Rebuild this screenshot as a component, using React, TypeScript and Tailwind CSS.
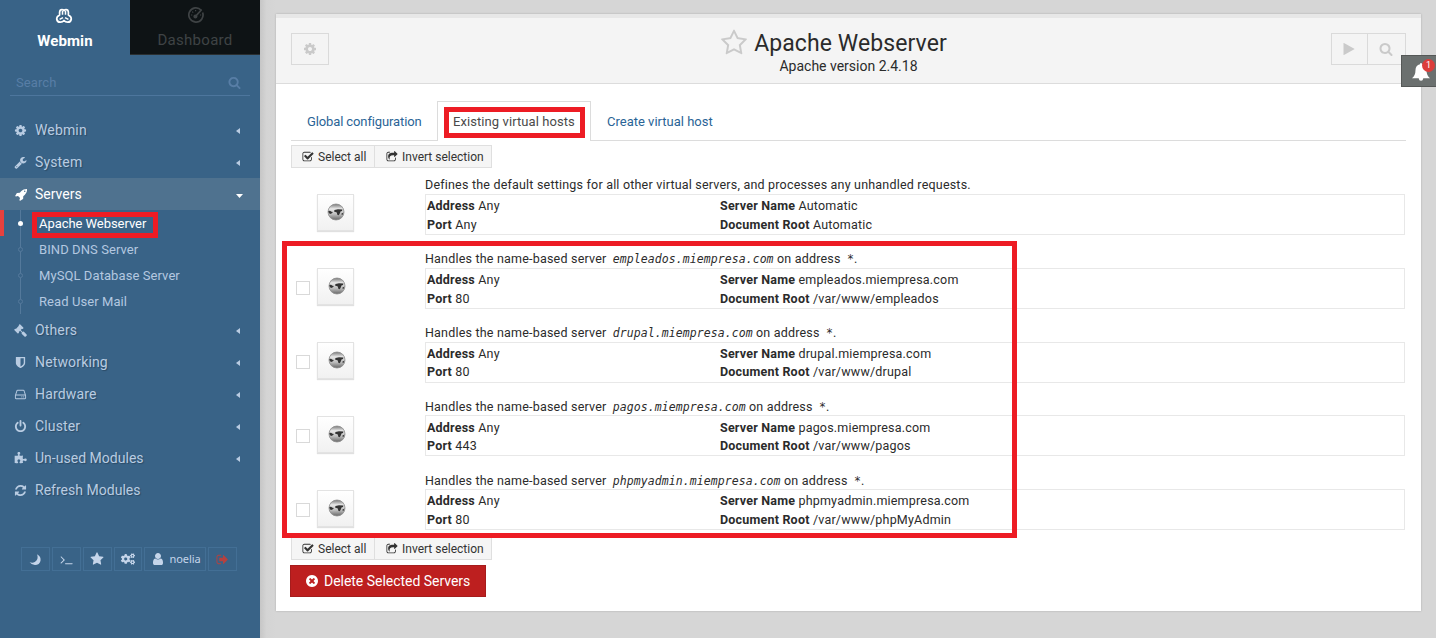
import React from "react";
import { FaCogs } from "react-icons/fa";

const P = {
  cog: "M1152 896q0-106-75-181t-181-75-181 75-75 181 75 181 181 75 181-75 75-181zm512-109v222q0 12-8 23t-20 13l-185 28q-19 54-39 91 35 50 107 138 10 12 10 25t-9 23q-27 37-99 108t-94 71q-12 0-26-9l-138-108q-44 23-91 38-16 136-29 186-7 28-36 28h-222q-14 0-24.5-8.5t-11.5-21.5l-28-184q-49-16-90-37l-141 107q-10 9-25 9-14 0-25-11-126-114-165-168-7-10-7-23 0-12 8-23 15-21 51-66.5t54-70.5q-27-50-41-99l-183-27q-13-2-21-12.5t-8-23.5v-222q0-12 8-23t19-13l186-28q14-46 39-92-40-57-107-138-10-12-10-24 0-10 9-23 26-36 98.5-107.5t94.5-71.5q13 0 26 10l138 107q44-23 91-38 16-136 29-186 7-28 36-28h222q14 0 24.5 8.5t11.5 21.5l28 184q49 16 90 37l142-107q9-9 24-9 13 0 25 10 129 119 165 170 7 8 7 22 0 12-8 23-15 21-51 66.5t-54 70.5q26 50 41 98l183 28q13 2 21 12.5t8 23.5z",
  search: "M1216 832q0-185-131.5-316.5t-316.5-131.5-316.5 131.5-131.5 316.5 131.5 316.5 316.5 131.5 316.5-131.5 131.5-316.5zm512 832q0 52-38 90t-90 38q-54 0-90-38l-343-342q-179 124-399 124-143 0-273.5-55.5t-225-150-150-225-55.5-273.5 55.5-273.5 150-225 225-150 273.5-55.5 273.5 55.5 225 150 150 225 55.5 273.5q0 220-124 399l343 343q37 37 37 90z",
  refresh: "M1639 1056q0 5-1 7-64 268-268 434.5t-478 166.5q-146 0-282.5-55t-243.5-157l-129 129q-19 19-45 19t-45-19-19-45v-448q0-26 19-45t45-19h448q26 0 45 19t19 45-19 45l-137 137q71 66 161 102t187 36q134 0 250-65t186-179q11-17 53-117 8-23 30-23h192q13 0 22.5 9.5t9.5 22.5zm25-800v448q0 26-19 45t-45 19h-448q-26 0-45-19t-19-45 19-45l138-138q-148-137-349-137-134 0-250 65t-186 179q-11 17-53 117-8 23-30 23h-199q-13 0-22.5-9.5t-9.5-22.5v-7q65-268 270-434.5t480-166.5q146 0 284 55.5t245 156.5l130-129q19-19 45-19t45 19 19 45z",
  power: "M1664 896q0 156-61 298t-164 245-245 164-298 61-298-61-245-164-164-245-61-298q0-182 80.5-343t226.5-270q43-32 95.5-25t83.5 50q32 42 24.5 94.5t-49.5 84.5q-98 74-151.5 181t-53.5 228q0 104 40.5 198.5t109.5 163.5 163.5 109.5 198.5 40.5 198.5-40.5 163.5-109.5 109.5-163.5 40.5-198.5q0-121-53.5-228t-151.5-181q-42-32-49.5-84.5t24.5-94.5q31-43 84-50t95 25q146 109 226.5 270t80.5 343zm-640-768v640q0 52-38 90t-90 38-90-38-38-90v-640q0-52 38-90t90-38 90 38 38 90z",
  check: "M1472 930v318q0 119-84.5 203.5t-203.5 84.5h-832q-119 0-203.5-84.5t-84.5-203.5v-832q0-119 84.5-203.5t203.5-84.5h832q63 0 117 25 15 7 18 23 3 17-9 29l-49 49q-10 10-23 10-3 0-9-2-23-6-45-6h-832q-66 0-113 47t-47 113v832q0 66 47 113t113 47h832q66 0 113-47t47-113v-254q0-13 9-22l64-64q10-10 23-10 6 0 12 3 20 8 20 29zm231-489l-814 814q-24 24-57 24t-57-24l-430-430q-24-24-24-57t24-57l110-110q24-24 57-24t57 24l263 263 647-647q24-24 57-24t57 24l110 110q24 24 24 57t-24 57z",
  share: "M1472 989v259q0 119-84.5 203.5t-203.5 84.5h-832q-119 0-203.5-84.5t-84.5-203.5v-832q0-119 84.5-203.5t203.5-84.5h255q13 0 22.5 9.5t9.5 22.5q0 27-26 32-77 26-133 60-10 4-16 4h-112q-66 0-113 47t-47 113v832q0 66 47 113t113 47h832q66 0 113-47t47-113v-214q0-19 18-29 28-13 54-37 16-16 35-8 21 9 21 29zm237-496l-384 384q-18 19-45 19-12 0-25-5-39-17-39-59v-192h-160q-323 0-438 131-119 137-74 473 3 23-20 34-8 2-12 2-16 0-26-13-10-14-21-31t-39.5-68.5-49.5-99.5-38.5-114-17.5-122q0-49 3.5-91t14-90 28-88 47-81.5 68.5-74 94.5-61.5 124.5-48.5 159.5-30.5 196.5-11h160v-192q0-42 39-59 13-5 25-5 26 0 45 19l384 384q19 19 19 45t-19 45z",
  times: "M1277 1122q0-26-19-45l-181-181 181-181q19-19 19-45 0-27-19-46l-90-90q-19-19-46-19-26 0-45 19l-181 181-181-181q-19-19-45-19-27 0-46 19l-90 90q-19 19-19 46 0 26 19 45l181 181-181 181q-19 19-19 45 0 27 19 46l90 90q19 19 46 19 26 0 45-19l181-181 181 181q19 19 45 19 27 0 46-19l90-90q19-19 19-46zm387-226q0 209-103 385.5t-279.5 279.5-385.5 103-385.5-103-279.5-279.5-103-385.5 103-385.5 279.5-279.5 385.5-103 385.5 103 279.5 279.5 103 385.5z",
  star: "M1728 647q0 22-26 48l-363 354 86 500q1 7 1 20 0 21-10.5 35.5t-30.5 14.5q-19 0-40-12l-449-236-449 236q-22 12-40 12-21 0-31.5-14.5t-10.5-35.5q0-6 2-20l86-500-364-354q-25-27-25-48 0-37 56-46l502-73 225-455q19-41 49-41t49 41l225 455 502 73q56 9 56 46z",
  starO: "M1201 1004l306-297-422-62-189-382-189 382-422 62 306 297-73 421 378-199 377 199zm527-357q0 22-26 48l-363 354 86 500q1 7 1 20 0 50-41 50-19 0-40-12l-449-236-449 236q-22 12-40 12-21 0-31.5-14.5t-10.5-35.5q0-6 2-20l86-500-364-354q-25-27-25-48 0-37 56-46l502-73 225-455q19-41 49-41t49 41l225 455 502 73q56 9 56 46z",
  wrench: "M448 1472q0-26-19-45t-45-19-45 19-19 45 19 45 45 19 45-19 19-45zm644-420l-682 682q-37 37-90 37-52 0-91-37l-106-108q-38-36-38-90 0-53 38-91l681-681q39 98 114.5 173.5t173.5 114.5zm634-435q0 39-23 106-47 134-164.5 217.5t-258.5 83.5q-185 0-316.5-131.5t-131.5-316.5 131.5-316.5 316.5-131.5q58 0 121.5 16.5t107.5 46.5q16 11 16 28t-16 28l-293 169v224l193 107q5-3 79-48.5t135.5-81 70.5-35.5q15 0 23.5 10t8.5 25z",
  rocket: "M1440 448q0-40-28-68t-68-28-68 28-28 68 28 68 68 28 68-28 28-68zm224-288q0 249-75.5 430.5t-253.5 360.5q-81 80-195 176l-20 379q-2 16-16 26l-384 224q-7 4-16 4-12 0-23-9l-64-64q-13-14-8-32l85-276-281-281-276 85q-3 1-9 1-14 0-23-9l-64-64q-17-19-5-39l224-384q10-14 26-16l379-20q96-114 176-195 188-187 358-258t431-71q14 0 24 9.5t10 22.5z",
  gavel: "M1771 1536q0 53-37 90l-107 108q-39 37-91 37-53 0-90-37l-363-364q-38-36-38-90 0-53 43-96l-256-256-126 126q-14 14-34 14t-34-14q2 2 12.5 12t12.5 13 10 11.5 10 13.5 6 13.5 5.5 16.5 1.5 18q0 38-28 68-3 3-16.5 18t-19 20.5-18.5 16.5-22 15.5-22 9-26 4.5q-40 0-68-28l-408-408q-28-28-28-68 0-13 4.5-26t9-22 15.5-22 16.5-18.5 20.5-19 18-16.5q30-28 68-28 10 0 18 1.5t16.5 5.5 13.5 6 13.5 10 11.5 10 13 12.5 12 12.5q-14-14-14-34t14-34l348-348q14-14 34-14t34 14q-2-2-12.5-12t-12.5-13-10-11.5-10-13.5-6-13.5-5.5-16.5-1.5-18q0-38 28-68 3-3 16.5-18t19-20.5 18.5-16.5 22-15.5 22-9 26-4.5q40 0 68 28l408 408q28 28 28 68 0 13-4.5 26t-9 22-15.5 22-16.5 18.5-20.5 19-18 16.5q-30 28-68 28-10 0-18-1.5t-16.5-5.5-13.5-6-13.5-10-11.5-10-13-12.5-12-12.5q14 14 14 34t-14 34l-126 126 256 256q43-43 96-43 52 0 91 37l363 363q37 39 37 91z",
  shield: "M1344 960v-640h-448v1137q119-63 213-137 235-184 235-360zm192-768v768q0 86-33.5 170.5t-83 150-118 127.5-126.5 103-121 77.5-89.5 49.5-42.5 20q-12 6-26 6t-26-6q-16-7-42.5-20t-89.5-49.5-121-77.5-126.5-103-118-127.5-83-150-33.5-170.5v-768q0-26 19-45t45-19h1152q26 0 45 19t19 45z",
  hdd: "M1168 1216q0 33-23.5 56.5t-56.5 23.5-56.5-23.5-23.5-56.5 23.5-56.5 56.5-23.5 56.5 23.5 23.5 56.5zm256 0q0 33-23.5 56.5t-56.5 23.5-56.5-23.5-23.5-56.5 23.5-56.5 56.5-23.5 56.5 23.5 23.5 56.5zm112 160v-320q0-13-9.5-22.5t-22.5-9.5h-1216q-13 0-22.5 9.5t-9.5 22.5v320q0 13 9.5 22.5t22.5 9.5h1216q13 0 22.5-9.5t9.5-22.5zm-1230-480h1180l-157-482q-4-13-16-21.5t-26-8.5h-782q-14 0-26 8.5t-16 21.5zm1358 160v320q0 66-47 113t-113 47h-1216q-66 0-113-47t-47-113v-320q0-25 16-75l197-606q17-53 63-86t101-33h782q55 0 101 33t63 86l197 606q16 50 16 75z",
  puzzle: "M1755 1083q0 81-44.5 135t-123.5 54q-41 0-77.5-17.5t-59-38-56.5-38-71-17.5q-110 0-110 124 0 39 16 115t15 115v5q-22 0-33 1-34 3-97.5 11.5t-115.5 13.5-98 5q-61 0-103-26.5t-42-83.5q0-37 17.5-71t38-56.5 38-59 17.5-77.5q0-79-54-123.5t-135-44.5q-84 0-143 45.5t-59 127.5q0 43 15 83t33.5 64.5 33.5 53 15 50.5q0 45-46 89-37 35-117 35-95 0-245-24-9-2-27.5-4t-27.5-4l-13-2q-1 0-3-1-2 0-2-1v-1024q2 1 17.5 3.5t34 5 21.5 3.5q150 24 245 24 80 0 117-35 46-44 46-89 0-22-15-50.5t-33.5-53-33.5-64.5-15-83q0-82 59-127.5t144-45.5q80 0 134 44.5t54 123.5q0 41-17.5 77.5t-38 59-38 56.5-17.5 71q0 57 42 83.5t103 26.5q64 0 180-15t163-17v2q-1 2-3.5 17.5t-5 34-3.5 21.5q-24 150-24 245 0 80 35 117 44 46 89 46 22 0 50.5-15t53-33.5 64.5-33.5 83-15q82 0 127.5 59t45.5 143z",
  terminal: "M649 983l-466 466q-10 10-23 10t-23-10l-50-50q-10-10-10-23t10-23l393-393-393-393q-10-10-10-23t10-23l50-50q10-10 23-10t23 10l466 466q10 10 10 23t-10 23zm1079 457v64q0 14-9 23t-23 9h-960q-14 0-23-9t-9-23v-64q0-14 9-23t23-9h960q14 0 23 9t9 23z",
  user: "M1536 1399q0 109-62.5 187t-150.5 78h-854q-88 0-150.5-78t-62.5-187q0-85 8.5-160.5t31.5-152 58.5-131 94-89 134.5-34.5q131 128 313 128t313-128q76 0 134.5 34.5t94 89 58.5 131 31.5 152 8.5 160.5zm-256-887q0 159-112.5 271.5t-271.5 112.5-271.5-112.5-112.5-271.5 112.5-271.5 271.5-112.5 271.5 112.5 112.5 271.5z",
  signOut: "M704 1440q0 4 1 20t.5 26.5-3 23.5-10 19.5-20.5 6.5h-320q-119 0-203.5-84.5t-84.5-203.5v-704q0-119 84.5-203.5t203.5-84.5h320q13 0 22.5 9.5t9.5 22.5q0 4 1 20t.5 26.5-3 23.5-10 19.5-20.5 6.5h-320q-66 0-113 47t-47 113v704q0 66 47 113t113 47h312l11.5 1 11.5 3 8 5.5 7 9 2 13.5zm928-544q0 26-19 45l-544 544q-19 19-45 19t-45-19-19-45v-288h-448q-26 0-45-19t-19-45v-384q0-26 19-45t45-19h448v-288q0-26 19-45t45-19 45 19l544 544q19 19 19 45z",
  play: "M1576 927l-1328 738q-23 13-39.5 3t-16.5-36v-1472q0-26 16.5-36t39.5 3l1328 738q23 13 23 31t-23 31z",
  moon: "M80 1240q210 120 440 90 320-50 510-290 170-220 160-500-10-200-100-380 290 120 430 400 110 250 70 520-60 270-260 430-230 170-520 160-460-20-730-430z",
};

const Icon = ({ d, size = 14, className = "" }: { d: string; size?: number; className?: string }) => (
  <svg viewBox="0 0 1792 1792" width={size} height={size} fill="currentColor" className={`shrink-0 ${className}`}>
    <path d={d} />
  </svg>
);

const WebminLogo = () => (
  <svg viewBox="0 0 18 16" width="18" height="16" fill="none" stroke="#fff" strokeWidth="1.7" strokeLinejoin="round" className="-ml-0.5">
    <path d="M4.600 7V4.300Q4.800 1.700 6.900 1.700Q8.200 1.700 9 2.700Q9.800 1.700 11.100 1.700Q13.200 1.700 13.400 4.300V7Q16.400 8.600 16.300 11Q15.800 14.300 12.700 14.200Q10.300 14 9 12.500Q7.700 14 5.300 14.200Q2.200 14.300 1.700 11Q1.600 8.600 4.600 7Z" />
    <path d="M7.500 3V6.800M10.500 3V6.800M4.600 11.400L8 9.600M13.400 11.400L10 9.600" strokeWidth="1.500" />
  </svg>
);

const Gauge = () => (
  <svg viewBox="0 0 16 16" width="16" height="16" fill="none" stroke="#3f4345" strokeWidth="1.700" className="ml-0.5">
    <path d="M13.200 3.200A7.100 7.100 0 1 0 14.600 5.500" />
    <path d="M7.200 9.800L13.600 2.600" strokeWidth="1.600" />
    <circle cx="7.400" cy="9.400" r="2" fill="#3f4345" stroke="none" />
    <path d="M3 8h1.300M4.300 4.700l.9.900M7.600 3v1.300M12 8h1.200" strokeWidth="1.200" />
  </svg>
);

const Globe = () => (
  <svg viewBox="0 0 18 18" width="18" height="18" className="-mt-px">
    <defs>
      <linearGradient id="globe" x1="0" y1="0" x2="0" y2="1">
        <stop offset="0" stopColor="#777" />
        <stop offset=".3" stopColor="#e8e8e8" />
        <stop offset=".65" stopColor="#bbb" />
        <stop offset="1" stopColor="#666" />
      </linearGradient>
    </defs>
    <circle cx="9" cy="9" r="8" fill="url(#globe)" stroke="#8d8d8d" strokeWidth=".8" />
    <path d="M1.300 8L3 7.800 4.500 8.800 6 9 4.500 10.500 3 11Q1.300 10 1.300 8ZM7.500 7L11 6.300 15.500 6.500 15 8 13.500 8.500 13 10 11.800 12.200 10.300 11.800 9.800 9.500 7 8.600ZM14 11L16.500 9.500 15.500 12Z" fill="#333" />
  </svg>
);

const menuTop = [
  { label: "Webmin", d: P.cog },
  { label: "System", d: P.wrench },
];
const menuBottom = [
  { label: "Others", d: P.gavel, arrow: true },
  { label: "Networking", d: P.shield, arrow: true },
  { label: "Hardware", d: P.hdd, arrow: true },
  { label: "Cluster", d: P.power, arrow: true },
  { label: "Un-used Modules", d: P.puzzle, arrow: true },
  { label: "Refresh Modules", d: P.refresh, arrow: false },
];

const MenuRow = ({ label, d, arrow = true }: { label: string; d: string; arrow?: boolean }) => (
  <div className="flex h-8 items-center pr-5 pl-[14px] text-[#b9cce2] [text-shadow:1px_1px_1px_rgba(0,0,0,0.25)]">
    <Icon d={d} size={13} className="mr-2" />
    <span className={`flex-1 text-[14px] ${label.includes("Modules") ? "tracking-[0.02px]" : "tracking-[0.15px]"}`}>{label}</span>
    {arrow && (
      <svg width="4" height="6" viewBox="0 0 4 6" fill="currentColor" className="mt-0.5">
        <path d="M4 0v6L0 3z" />
      </svg>
    )}
  </div>
);

const subItems = ["Apache Webserver", "BIND DNS Server", "MySQL Database Server", "Read User Mail"];

const ToolButton = ({ children, className }: { children: React.ReactNode; className: string }) => (
  <div className={`flex h-6 items-center justify-center border border-[#436f95] text-[#c5d5ea] ${className}`}>{children}</div>
);

const Sidebar = () => (
  <aside className="flex h-[638px] w-[260px] shrink-0 flex-col bg-[#396387]">
    <div className="flex h-[55px]">
      <div className="flex w-[130px] flex-col items-center pt-2 text-[15px] leading-[18px] font-bold tracking-[0.1px] text-white">
        <WebminLogo />
        <span className="mt-2">Webmin</span>
      </div>
      <div className="flex w-[130px] flex-col items-center border-b border-[#2a2f31] bg-[#0e1315] pt-[7px] text-[15px] leading-[18px] tracking-[0.3px] text-[#3f4345]">
        <Gauge />
        <span className="mt-2">Dashboard</span>
      </div>
    </div>
    <div className="mx-[10px] mt-[14px] flex h-[27px] items-center border-b border-[#4d769d] pr-[9px] pl-[6px] text-[#587ea6]">
      <span className="flex-1 pt-px text-[13px] tracking-[0.1px]">Search</span>
      <Icon d={P.search} size={13} />
    </div>
    <nav className="mt-[18px]">
      {menuTop.map((m) => (
        <MenuRow key={m.label} {...m} />
      ))}
      <div className="flex h-8 items-center bg-[#4f728f] pr-[17px] pl-[15px] text-white">
        <Icon d={P.rocket} size={13} className="mr-[7px]" />
        <span className="flex-1 text-[14px]">Servers</span>
        <svg width="7" height="4" viewBox="0 0 7 4" fill="currentColor" className="mt-1">
          <path d="M0 0h7L3.500 4z" />
        </svg>
      </div>
      <div className="relative h-[104px]">
        <div className="absolute top-0 left-5 h-[104px] w-px bg-[#54799b]" />
        <div className="absolute top-0 left-0 h-[26px] w-1 bg-[#e7413e]" />
        {subItems.map((s, i) => (
          <div
            key={s}
            className={`relative flex h-[26px] items-center pt-px pl-[18px] text-[13px] ${i === 0 ? "tracking-[-0.05px] text-white" : "tracking-[0.08px] text-[#b4c8e0]"}`}
          >
            <span className={`size-[5px] rounded-full ${i === 0 ? "bg-white" : "border border-[#54799b] bg-[#396387]"}`} />
            <span className="ml-4">{s}</span>
          </div>
        ))}
        <div className="absolute top-[2px] left-8 h-[26px] w-[126px] border-[5px] border-[#ed1c24]" />
      </div>
      {menuBottom.map((m) => (
        <MenuRow key={m.label} {...m} />
      ))}
    </nav>
    <div className="mt-[41px] ml-[21px] flex gap-[2px]">
      <ToolButton className="w-[29px]"><Icon d={P.moon} size={13} /></ToolButton>
      <ToolButton className="w-[29px]"><Icon d={P.terminal} size={13} /></ToolButton>
      <ToolButton className="w-[29px] pr-px"><Icon d={P.star} size={14} /></ToolButton>
      <ToolButton className="w-[28px]"><FaCogs size={14} /></ToolButton>
      <ToolButton className="w-[62px] pl-px font-['Noto_Sans',sans-serif] text-[11px] tracking-[-0.1px]"><Icon d={P.user} size={14} className="mr-[5px]" />noelia</ToolButton>
      <ToolButton className="w-[29px]"><Icon d={P.signOut} size={13} className="text-[#b5413f]" /></ToolButton>
    </div>
  </aside>
);

const SelectBar = () => (
  <div className="flex h-[23px] w-[201px] border border-[#dfdfdf] bg-[#f5f5f5] text-[12px] text-[#333]">
    <div className="flex w-[83px] items-center border-r border-[#dfdfdf] pl-[10px]">
      <Icon d={P.check} size={12} className="mr-1" />Select all
    </div>
    <div className="flex items-center pl-[11px]">
      <Icon d={P.share} size={12} className="mr-1" />Invert selection
    </div>
  </div>
);

const hosts = [
  { host: "", port: "Any", name: "Automatic", root: "Automatic" },
  { host: "empleados.miempresa.com", port: "80", name: "empleados.miempresa.com", root: "/var/www/empleados" },
  { host: "drupal.miempresa.com", port: "80", name: "drupal.miempresa.com", root: "/var/www/drupal" },
  { host: "pagos.miempresa.com", port: "443", name: "pagos.miempresa.com", root: "/var/www/pagos" },
  { host: "phpmyadmin.miempresa.com", port: "80", name: "phpmyadmin.miempresa.com", root: "/var/www/phpMyAdmin" },
];

const boxStyles = [
  "auto-rows-[19px] pt-px leading-[19px]",
  "auto-rows-[19px] pt-px leading-[19px]",
  "auto-rows-[18px] pt-[2px] leading-[18px]",
  "-mt-px auto-rows-[18px] pt-[3px] leading-[18px]",
  "-mt-px auto-rows-[19px] pt-px leading-[19px]",
];

const HostRow = ({ h, box }: { h: (typeof hosts)[number]; box: string }) => (
  <div className="flex h-[74px]">
    <div className="flex w-[26px] pt-[32px] pl-[5px]">
      {h.host && <div className="size-[14px] border border-[#d9d9d9] bg-white" />}
    </div>
    <div className={`mt-[19px] flex size-[37px] items-center justify-center border border-[#e3e3e3] bg-linear-to-b from-white to-[#f1f1f1] shadow-[0_1px_1px_rgba(0,0,0,0.12)] ${h.host ? "pl-[3px]" : ""}`}>
      <Globe />
    </div>
    <div className="ml-[71px] w-[980px] tracking-[0.2px]">
      <div className="h-[19px] pt-px text-[12.500px] leading-[18px] whitespace-nowrap">
        {h.host ? (
          <>
            Handles the name-based server{" "}
            <i className="ml-[3px] font-['DejaVu_Sans_Mono',monospace] text-[11.500px] tracking-[0.070px]">{h.host}</i> on address{" "}
            <i className="ml-[3px] font-['DejaVu_Sans_Mono',monospace] text-[11.500px] tracking-[0.070px]">*</i>.
          </>
        ) : (
          "Defines the default settings for all other virtual servers, and processes any unhandled requests."
        )}
      </div>
      <div className={`grid h-[41px] grid-cols-[293px_1fr] border border-[#e8e8e8] pl-px text-[12.500px] ${box}`}>
        <div><b className="font-bold">Address</b> Any</div>
        <div><b className="font-bold">Server Name</b> {h.name}</div>
        <div><b className="font-bold">Port</b> {h.port}</div>
        <div><b className="font-bold">Document Root</b> {h.root}</div>
      </div>
    </div>
  </div>
);

export default function App() {
  return (
    <div className="relative flex h-[638px] w-[1436px] overflow-hidden bg-[#d6d6d6] font-['Roboto',sans-serif] text-[#2b2b2b]">
      <Sidebar />
      <div className="w-4 shrink-0 bg-linear-to-r from-[#c6c6c6] via-[#d4d4d4] via-40% to-[#d6d6d6]" />
      <main className="mt-[14px] h-[597px] w-[1145px] border-t-4 border-[#e7e7e7] bg-white shadow-[0_0_2px_rgba(0,0,0,0.2)]">
        <header className="flex h-[66px] items-start justify-between border-b border-[#dcdcdc] bg-[#f4f4f4] px-[15px] pt-[15px] text-[#cacaca]">
          <div className="flex h-8 w-[38px] items-center justify-center border border-[#dadada]"><Icon d={P.cog} size={14} /></div>
          <div className="-mt-1 ml-[7px] flex flex-col items-center">
            <div className="flex h-7 items-center">
              <Icon d={P.starO} size={28} className="mr-1.5" />
              <h1 className="pt-0.5 text-[23px] leading-7 tracking-[0.09px] text-[#2b2b2b]">Apache Webserver</h1>
            </div>
            <div className="ml-[30px] text-[14px] leading-[18px] text-[#2b2b2b]">Apache version 2.4.18</div>
          </div>
          <div className="flex h-8 w-[75px] border border-[#dadada]">
            <div className="flex w-[36px] items-center justify-center border-r border-[#dadada]"><Icon d={P.play} size={14} /></div>
            <div className="flex flex-1 items-center justify-center"><Icon d={P.search} size={14} /></div>
          </div>
        </header>
        <div className="px-[15px] pt-[17px]">
          <div className="flex h-10 border-b border-[#dcdcdc] text-[13px] text-[#2a6496]">
            <div className="w-[146px] pt-3 pl-4 leading-[18px] tracking-[-0.12px]">Global configuration</div>
            <div className="-mb-px w-[154px] border border-b-0 border-[#dcdcdc] bg-white pt-[11px] pl-[15px] leading-[18px] tracking-[0.08px] text-[#4a4a4a]">Existing virtual hosts</div>
            <div className="pt-3 pl-4 leading-[18px]">Create virtual host</div>
          </div>
          <div className="pt-1"><SelectBar /></div>
          <div className="mt-[7px]">
            {hosts.map((h, i) => (
              <HostRow key={h.name} h={h} box={boxStyles[i]} />
            ))}
          </div>
          <div className="-mt-[8px]"><SelectBar /></div>
          <div className="mt-[5px] -ml-px flex h-8 w-[196px] items-center border border-[#a61c1c] bg-[#bd1f1f] pl-[14px] text-[14px] tracking-[-0.03px] text-white">
            <Icon d={P.times} size={14} className="mr-[5px]" />Delete Selected Servers
          </div>
        </div>
      </main>
      <div className="absolute top-[107px] left-[444px] h-[31px] w-[141px] border-[5px] border-[#ed1c24]" />
      <div className="absolute top-[241px] left-[282px] h-[297px] w-[735px] border-[5px] border-[#ed1c24]" />
      <div className="absolute top-[55px] left-[1401px] flex h-8 w-[36px] items-center border border-[#555857] bg-[#6b706f] pt-px pl-[9px]">
        <svg width="20" height="20" viewBox="0 0 20 20" fill="#fff">
          <path d="M10 1Q11 1 11 2.200Q15.500 3.500 15.500 8Q15.500 13.500 19 16.300H12.300Q12 18.800 10 18.800T7.700 16.300H1Q4.500 13.500 4.500 8Q4.500 3.500 9 2.200Q9 1 10 1Z" />
        </svg>
        <span className="absolute top-[3px] left-[20px] flex size-[13px] items-center justify-center rounded-full bg-[#dc3d3b] text-[9px] text-white">1</span>
      </div>
    </div>
  );
}
